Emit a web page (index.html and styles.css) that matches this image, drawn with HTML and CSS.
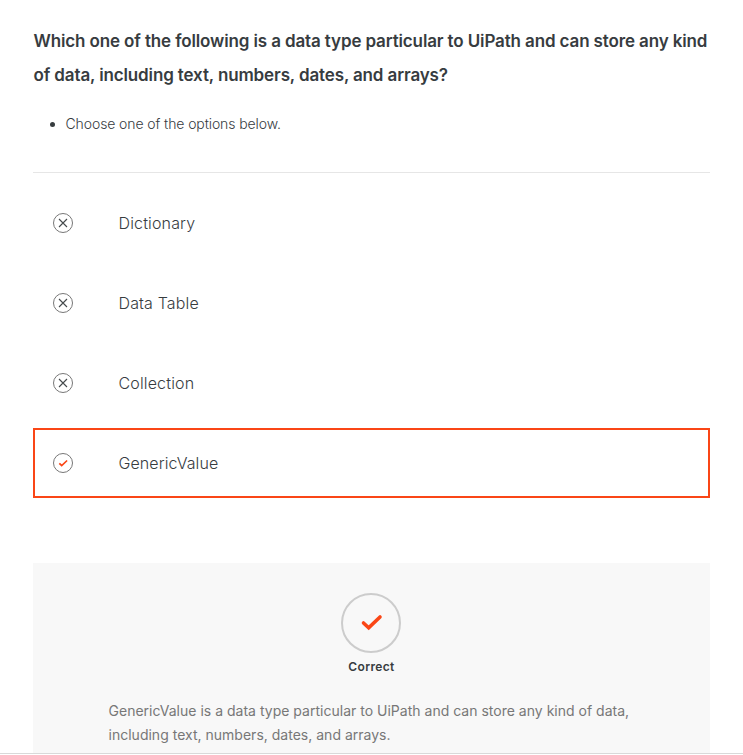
FILE: index.html
```
<!DOCTYPE html>
<html lang="en">
<head>
<meta charset="utf-8">
<title>Quiz</title>
<link rel="stylesheet" href="styles.css">
</head>
<body>
<main class="quiz">
<h1 class="question"><span class="line">Which one of the following is a data type particular to UiPath and can store any kind</span> <span class="line">of data, including text, numbers, dates, and arrays?</span></h1>
<ul class="hint"><li>Choose one of the options below.</li></ul>
<div class="options">
<div class="option"><svg class="mark" viewBox="0 0 22 22"><circle cx="11" cy="11" r="9.5"/><path d="M7 7l8 8M15 7l-8 8"/></svg><span>Dictionary</span></div>
<div class="option"><svg class="mark" viewBox="0 0 22 22"><circle cx="11" cy="11" r="9.5"/><path d="M7 7l8 8M15 7l-8 8"/></svg><span>Data Table</span></div>
<div class="option"><svg class="mark" viewBox="0 0 22 22"><circle cx="11" cy="11" r="9.5"/><path d="M7 7l8 8M15 7l-8 8"/></svg><span>Collection</span></div>
<div class="option selected"><svg class="mark" viewBox="0 0 22 22"><circle cx="11" cy="11" r="9.5"/><path class="tick" d="M7.3 11.3l2.4 2.2 5.4-5"/></svg><span>GenericValue</span></div>
</div>
<section class="feedback">
<svg class="badge" viewBox="0 0 60 60"><circle cx="30" cy="30" r="29"/><path d="M22.5 30l5.2 4.8L39 24"/></svg>
<strong class="verdict">Correct</strong>
<p class="explanation"><span class="line">GenericValue is a data type particular to UiPath and can store any kind of data,</span> <span class="line">including text, numbers, dates, and arrays.</span></p>
</section>
</main>
</body>
</html>
```
FILE: styles.css
```
* { box-sizing: border-box; }
body { margin: 0; height: 755px; overflow: hidden; background: #fff; font-family: Inter, "Liberation Sans", sans-serif; color: #373c3f; }
.quiz { height: 754px; overflow: hidden; padding: 24px 33px 0; border-bottom: 1px solid #d9d9d9; }
.question { margin: 0; padding-left: 0.5px; font-size: 17px; line-height: 34px; font-weight: 600; letter-spacing: -0.13px; white-space: nowrap; }
.line { display: block; }
.hint { margin: 20px 0 0; padding: 0 0 0 32.5px; height: 61px; border-bottom: 1px solid #e6e6e6; font-size: 14px; line-height: 24px; font-weight: 300; letter-spacing: -0.1px; }
.options { padding-top: 15px; }
.option { display: flex; align-items: center; width: 677px; height: 70px; margin-bottom: 10px; padding-left: 17px; border: 2px solid transparent; font-size: 16px; font-weight: 300; letter-spacing: 0.15px; }
.option span { margin-left: 44.5px; }
.option.selected { border-color: #fa4616; letter-spacing: 0.08px; }
.mark { width: 22px; height: 22px; fill: none; stroke: #777; stroke-width: 1; }
.mark path { stroke: #454a4c; stroke-width: 1.1; }
.mark .tick { stroke: #fa4616; stroke-width: 1.7; }
.feedback { display: flex; flex-direction: column; align-items: center; width: 677px; height: 220px; margin-top: 65px; padding: 30px 1px 0 0; background: #f8f8f8; }
.badge { width: 60px; height: 60px; fill: none; stroke: #ccc; stroke-width: 2; }
.badge path { stroke: #fa4616; stroke-width: 3.6; stroke-linecap: round; }
.verdict { margin: 4px 0 0 1px; font-size: 12px; line-height: 20px; font-weight: 600; letter-spacing: 0.35px; }
.explanation { width: 525px; margin: 22px 0 0; font-size: 14px; line-height: 24px; color: #777; white-space: nowrap; letter-spacing: 0.01px; }
```
